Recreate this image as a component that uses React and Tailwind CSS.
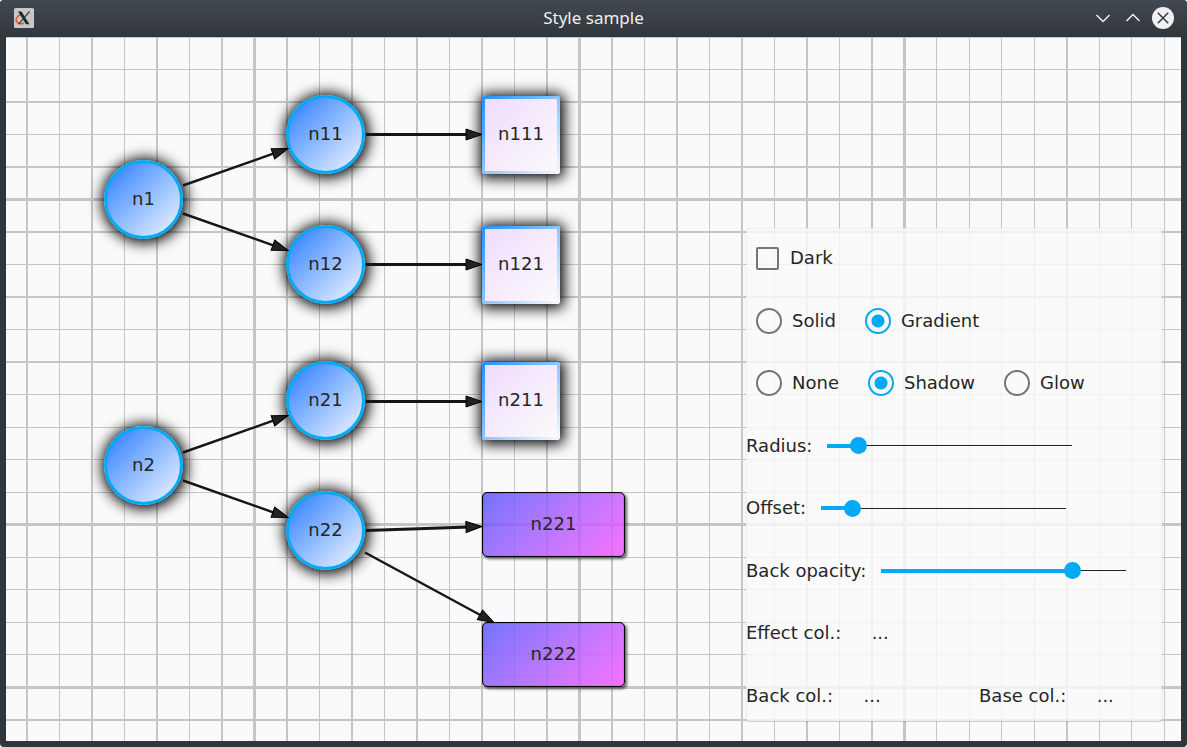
import React, { useState } from "react";

// Grid lines as [offset, thickness] pairs, in canvas pixels.
const COLUMNS = [
  [20, 2], [53, 1], [85, 2], [118, 1], [150, 2], [183, 1], [215, 2], [247, 3],
  [280, 2], [313, 1], [345, 2], [378, 1], [410, 2], [443, 1], [475, 2], [508, 1],
  [540, 2], [572, 3], [605, 2], [638, 1], [670, 2], [703, 1], [735, 2], [768, 1],
  [800, 2], [833, 1], [865, 2], [897, 3], [930, 1], [963, 1], [995, 1], [1028, 1],
  [1060, 2], [1093, 1], [1125, 1], [1158, 1],
];
const ROWS = [
  [0, 1], [32, 1], [64, 2], [97, 1], [129, 2], [161, 3], [194, 2], [227, 1],
  [259, 2], [292, 1], [324, 2], [357, 1], [390, 1], [422, 1], [455, 1], [486, 3],
  [520, 1], [552, 1], [585, 1], [617, 1], [649, 3], [682, 2],
];

const NODES = [
  { id: "n1", kind: "circle", x: 98, y: 123 },
  { id: "n11", kind: "circle", x: 280, y: 58 },
  { id: "n12", kind: "circle", x: 280, y: 188 },
  { id: "n2", kind: "circle", x: 98, y: 389 },
  { id: "n21", kind: "circle", x: 280, y: 324 },
  { id: "n22", kind: "circle", x: 280, y: 454 },
  { id: "n111", kind: "square", x: 476, y: 59 },
  { id: "n121", kind: "square", x: 476, y: 189 },
  { id: "n211", kind: "square", x: 476, y: 325 },
  { id: "n221", kind: "box", x: 476, y: 455 },
  { id: "n222", kind: "box", x: 476, y: 585 },
];

const EDGES = [
  { from: [177, 148], to: [282, 111] },
  { from: [177, 176], to: [282, 213] },
  { from: [360, 97], to: [476, 97], heavy: true },
  { from: [360, 227], to: [476, 227], heavy: true },
  { from: [177, 415], to: [282, 378] },
  { from: [177, 443], to: [282, 480] },
  { from: [360, 364], to: [476, 364], heavy: true },
  { from: [360, 493], to: [476, 489], heavy: true },
  { from: [359, 515], to: [488, 585] },
];

const NODE_STYLES = {
  circle:
    "size-[79px] rounded-full border-3 border-[#03a9f4] bg-linear-135 from-[#1473ff] to-[#fafaff] bg-origin-border shadow-[1px_1px_14px_3px_rgba(0,0,0,1)]",
  square:
    "size-[78px] rounded-[3px] border-3 border-transparent [background:linear-gradient(135deg,#f0dcff,#fafafa)_padding-box,linear-gradient(135deg,#1e90ff,#fafafa)_border-box] shadow-[1px_1px_14px_3px_rgba(0,0,0,1)]",
  box: "h-[65px] w-[143px] rounded-[5px] border border-black bg-linear-135 from-[#5555ff]/83 to-[#f854ff]/83 bg-origin-border shadow-[inset_0_0_1px_rgba(0,0,0,0.8),2px_2px_3px_rgba(0,0,0,0.6)]",
};

function Grid() {
  return (
    <g fill="#c6c6c6" shapeRendering="crispEdges">
      {COLUMNS.map(([x, w]) => (
        <rect key={x} x={x} y="0" width={w} height="100%" />
      ))}
      {ROWS.map(([y, h]) => (
        <rect key={y} x="0" y={y} width="100%" height={h} />
      ))}
    </g>
  );
}

function Edge({ from, to, heavy }) {
  const dx = to[0] - from[0];
  const dy = to[1] - from[1];
  const angle = (Math.atan2(dy, dx) * 180) / Math.PI;
  const length = Math.hypot(dx, dy);
  return (
    <g transform={`translate(${from[0]} ${from[1] + 0.5}) rotate(${angle})`}>
      <line x2={length - 12} stroke="#161616" strokeWidth={heavy ? 3 : 2.4} />
      <path
        d={`M${length} 0L${length - 16} -5.5V5.5Z`}
        fill="#222"
        stroke="#000"
        strokeWidth="1"
      />
    </g>
  );
}

function TitleBar() {
  return (
    <header className="grid h-[37px] grid-cols-[1fr_auto_1fr] items-center bg-linear-to-b from-[#434950] to-[#31363b] px-2 pb-0.5">
      <svg className="ml-[5px] size-[22px]" viewBox="0 0 22 22" aria-hidden="true">
        <rect x="1" y="1" width="20" height="20" rx="1.5" fill="#c3c9cc" />
        <path d="M14 6C18.500 5.800 20.500 8.500 18.500 11.500C16 15.500 11 17.500 7 16.800" fill="none" stroke="#e8b878" strokeWidth="1.200" />
        <path d="M7.500 7.500C3 9.500 2 13.500 4.500 15.500C6.500 17 9 17 11 16.300" fill="none" stroke="#ee5a24" strokeWidth="1.600" />
        <path d="M5 4.500H8.500L16.500 17.300H13Z" fill="#26292b" />
        <path d="M16.500 4.500L5.500 17.300" stroke="#3a3e40" strokeWidth="1.200" />
      </svg>
      <h1 className="font-['Noto_Sans'] text-[17px] leading-6 text-[#eff0f1]">Style sample</h1>
      <div className="flex items-center justify-end gap-2">
        <button type="button" aria-label="Minimize" className="size-[22px]">
          <svg viewBox="0 0 22 22" fill="none" stroke="#eff0f1" strokeWidth="1.500">
            <path d="M4.500 8L11 14.500L17.500 8" />
          </svg>
        </button>
        <button type="button" aria-label="Maximize" className="size-[22px]">
          <svg viewBox="0 0 22 22" fill="none" stroke="#eff0f1" strokeWidth="1.500">
            <path d="M4.500 14L11 7.500L17.500 14" />
          </svg>
        </button>
        <button type="button" aria-label="Close" className="mr-[5px] size-[22px]">
          <svg viewBox="0 0 22 22" fill="none" stroke="#31363b" strokeWidth="1.500">
            <circle cx="11" cy="11" r="11" fill="#eff0f1" stroke="none" />
            <path d="M5.800 5.800L16.200 16.200M16.200 5.800L5.800 16.200" />
          </svg>
        </button>
      </div>
    </header>
  );
}

function Radio({ name, label, value, onChange }) {
  return (
    <label className="flex items-center gap-2.5">
      <input
        type="radio"
        name={name}
        checked={value === label}
        onChange={() => onChange(label)}
        className="size-[26px] appearance-none rounded-full border-2 border-[#757575] checked:border-[#03a9f4] checked:bg-[radial-gradient(circle,#03a9f4_6px,transparent_7px)]"
      />
      {label}
    </label>
  );
}

function Slider({ id, label, initial }) {
  const [value, setValue] = useState(initial);
  return (
    <div className="flex h-12 items-center gap-[15px]">
      <label htmlFor={id}>{label}</label>
      <input
        id={id}
        type="range"
        min="0"
        max="100"
        value={value}
        onChange={(e) => setValue(Number(e.target.value))}
        style={{ backgroundSize: `${value}% 4px, 100% 1px` }}
        className="h-[17px] w-[245px] appearance-none bg-[linear-gradient(#03a9f4,#03a9f4),linear-gradient(#212121,#212121)] bg-left bg-no-repeat [&::-webkit-slider-thumb]:size-[17px] [&::-webkit-slider-thumb]:appearance-none [&::-webkit-slider-thumb]:rounded-full [&::-webkit-slider-thumb]:bg-[#03a9f4]"
      />
    </div>
  );
}

function ColorPick({ id, label }) {
  return (
    <div className="flex items-center gap-[15px]">
      <label htmlFor={id}>{label}</label>
      <button id={id} type="button" className="h-8 w-12 text-center">
        ...
      </button>
    </div>
  );
}

function StylePanel() {
  const [dark, setDark] = useState(false);
  const [fill, setFill] = useState("Gradient");
  const [effect, setEffect] = useState("Shadow");
  return (
    <form className="absolute right-[19px] bottom-5 flex h-[493px] w-[416px] flex-col justify-between rounded-[2px] bg-[#fafafa]/82 pt-1.5 pb-px shadow-[0_0_1px_rgba(0,0,0,0.2),0_1px_1px_rgba(0,0,0,0.15),inset_0_0_3px_rgba(0,0,0,0.08)]">
      <div className="flex h-12 items-center pl-2.5">
        <label className="flex items-center gap-[11px]">
          <input
            type="checkbox"
            checked={dark}
            onChange={(e) => setDark(e.target.checked)}
            className="size-[23px] appearance-none rounded-[2px] border-2 border-[#757575] checked:bg-[#03a9f4]"
          />
          Dark
        </label>
      </div>
      <div className="flex h-12 items-center gap-[29px] pl-2.5">
        {["Solid", "Gradient"].map((name) => (
          <Radio key={name} name="fill" label={name} value={fill} onChange={setFill} />
        ))}
      </div>
      <div className="flex h-12 items-center gap-[29px] pl-2.5">
        {["None", "Shadow", "Glow"].map((name) => (
          <Radio key={name} name="effect" label={name} value={effect} onChange={setEffect} />
        ))}
      </div>
      <Slider id="radius" label="Radius:" initial={10} />
      <Slider id="offset" label="Offset:" initial={10} />
      <Slider id="opacity" label="Back opacity:" initial={80} />
      <div className="flex h-12 items-center">
        <ColorPick id="effect-color" label="Effect col.:" />
      </div>
      <div className="grid h-12 grid-cols-[233px_1fr] items-center">
        <ColorPick id="back-color" label="Back col.:" />
        <ColorPick id="base-color" label="Base col.:" />
      </div>
    </form>
  );
}

export default function App() {
  return (
    <div className="flex min-h-screen flex-col overflow-hidden rounded-[4px] bg-[#31363b] font-['DejaVu_Sans',sans-serif] text-lg text-[#262626]">
      <TitleBar />
      <main className="relative mx-1.5 mb-1.5 flex-1 overflow-hidden bg-[#fafafa]">
        <svg className="absolute inset-0 size-full" aria-hidden="true">
          <Grid />
        </svg>
        {NODES.map(({ id, kind, x, y }) => (
          <div
            key={id}
            style={{ left: x, top: y }}
            className={`absolute flex items-center justify-center pb-0.5 ${NODE_STYLES[kind]}`}
          >
            {id}
          </div>
        ))}
        <svg className="pointer-events-none absolute inset-0 size-full" aria-hidden="true">
          {EDGES.map((edge) => (
            <Edge key={`${edge.from}-${edge.to}`} {...edge} />
          ))}
        </svg>
        <StylePanel />
      </main>
    </div>
  );
}
